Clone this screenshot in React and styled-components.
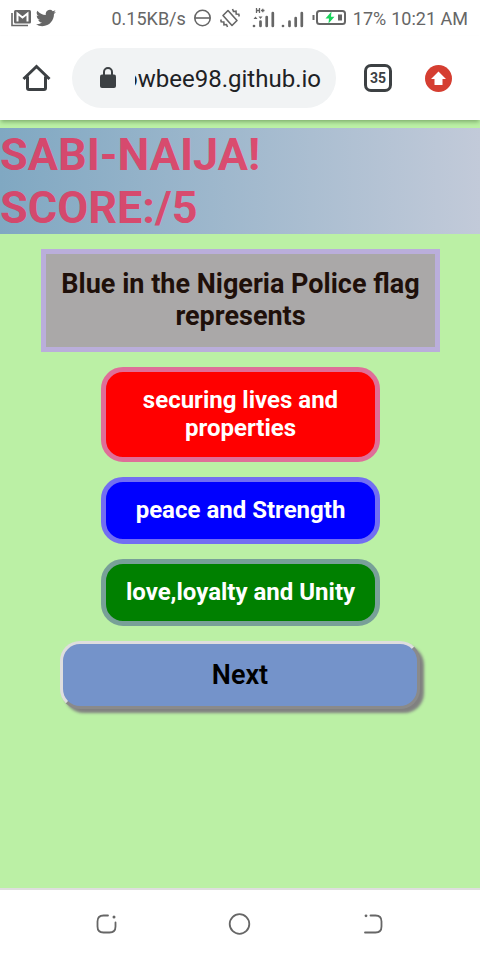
import React from "react";
import styled, { createGlobalStyle } from "styled-components";

const GlobalStyle = createGlobalStyle`
  *, *::before, *::after { box-sizing: border-box; }
  body { margin: 0; background: #bbf0a5; font-family: Roboto, sans-serif; }
  button, input { font-family: inherit; }
  svg { display: block; flex: none; }
`;

const Screen = styled.div`
  display: flex;
  flex-direction: column;
  min-height: 100vh;
`;

const StatusBar = styled.header`
  display: flex;
  align-items: center;
  justify-content: space-between;
  height: 36px;
  padding: 0 12px 0 10px;
  background: #fff;
  color: #666;
  font-size: 18px;
`;

const StatusGroup = styled.div`
  display: flex;
  align-items: center;
  gap: ${(p) => p.$gap}px;
  white-space: nowrap;
`;

const Toolbar = styled.nav`
  display: flex;
  align-items: center;
  height: 84px;
  padding: 0 28px 0 20px;
  background: #fff;
  box-shadow: 0 3px 4px -1px rgba(40, 80, 30, 0.4);
`;

const IconButton = styled.button`
  display: grid;
  place-items: center;
  flex: none;
  width: 32px;
  height: 32px;
  padding: 0;
  border: 0;
  background: none;
`;

const AddressBar = styled.label`
  display: flex;
  align-items: center;
  flex: 1;
  min-width: 0;
  height: 60px;
  margin: 0 28px 0 20px;
  padding: 0 15px 0 27px;
  gap: 18px;
  border-radius: 30px;
  background: #f1f3f4;
`;

const AddressInput = styled.input`
  flex: 1;
  min-width: 0;
  height: 36px;
  padding: 2px 0 0;
  border: 0;
  outline: 0;
  background: none;
  color: #202124;
  font-size: 24px;
  direction: rtl;
`;

const TabButton = styled(IconButton)`
  width: 28px;
  height: 28px;
  margin-right: 32px;
  border: 3px solid #3c4043;
  border-radius: 7px;
  color: #3c4043;
  font-size: 14px;
  font-weight: 700;
`;

const UpdateButton = styled(IconButton)`
  width: 28px;
  height: 28px;
`;

const Page = styled.main`
  flex: 1;
  padding-top: 8px;
`;

const Banner = styled.h1`
  margin: 0 0 15px;
  background: linear-gradient(to right, #80a8c2, #c2cad9);
  color: rgba(234, 46, 85, 0.8);
  font-size: 45px;
  font-weight: 700;
  line-height: 53px;
`;

const BannerLine = styled.span`
  display: block;
`;

const Quiz = styled.section`
  display: flex;
  flex-direction: column;
  gap: 15px;
  padding: 0 40px;
`;

const Question = styled.h2`
  margin: 0 0 0 1px;
  padding: 14px 5px 15px;
  border: 5px solid #baaedb;
  background: #aaa8a8;
  color: #1f100a;
  font-size: 27px;
  font-weight: 700;
  line-height: 32px;
  text-align: center;
`;

const Option = styled.button`
  margin: 0 60px 0 61px;
  padding: 14px 15px 15px;
  border: 5px solid ${(p) => p.$edge};
  border-radius: 22px;
  background: ${(p) => p.$fill};
  color: #fff;
  font-size: 24px;
  font-weight: 700;
  line-height: 28px;
`;

const NextButton = styled.button`
  margin: 0 20px;
  padding: 15px;
  border: 3px solid;
  border-color: #dedede #8a8a8a #8a8a8a #dedede;
  border-radius: 20px;
  background: #7493ca;
  box-shadow: 4px 4px 3px #808080;
  color: #000;
  font-size: 27px;
  font-weight: 600;
  line-height: 32px;
`;

const SystemNav = styled.footer`
  display: flex;
  align-items: center;
  justify-content: space-between;
  height: 72px;
  padding: 0 91px 2px 90px;
  border-top: 2px solid #dedede;
  background: #fff;
`;

const options = [
  { text: "securing lives and properties", fill: "#ff0000", edge: "#df6e98" },
  { text: "peace and Strength", fill: "#0000ff", edge: "#726ef2" },
  { text: "love,loyalty and Unity", fill: "#008000", edge: "#78a098" },
];

const MailIcon = () => (
  <svg width="22" height="18" viewBox="0 0 22 18" fill="none" stroke="#666">
    <path d="M2 4V16.5H18" strokeWidth="1.6" />
    <rect x="4" y="1" width="17" height="13.5" rx="1.5" fill="#666" stroke="none" />
    <path d="M7.5 12.5V4.5L12.5 8.5L17.5 4.5V12.5" stroke="#fff" strokeWidth="2" />
  </svg>
);

const BirdIcon = () => (
  <svg width="20" height="18" viewBox="0 2 24 20" fill="#666">
    <path d="M23.95 4.57a10 10 0 0 1-2.82.77 4.96 4.96 0 0 0 2.16-2.72c-.95.55-2 .95-3.13 1.18a4.92 4.92 0 0 0-8.38 4.48C7.69 8.1 4.07 6.13 1.64 3.16a4.92 4.92 0 0 0 1.52 6.57 4.9 4.9 0 0 1-2.23-.61v.06a4.92 4.92 0 0 0 3.95 4.83 5 5 0 0 1-2.21.08 4.94 4.94 0 0 0 4.6 3.42A9.87 9.87 0 0 1 0 19.54a14 14 0 0 0 7.55 2.21c9.05 0 14-7.5 14-13.98 0-.21 0-.42-.02-.63a9.94 9.94 0 0 0 2.42-2.57z" />
  </svg>
);

const DoNotDisturbIcon = () => (
  <svg width="18" height="18" viewBox="0 0 18 18" fill="none" stroke="#666" strokeWidth="1.6">
    <circle cx="8.5" cy="9" r="7.7" />
    <path d="M1 9H16" />
  </svg>
);

const RotationIcon = () => (
  <svg width="20" height="20" viewBox="0 0 20 20" fill="none" stroke="#666" strokeWidth="1.6">
    <path d="M8 2.5L17 12.5L12 17.5L3 7.5Z" strokeLinejoin="round" />
    <path d="M12.5 1L13.5 3.5L16 3.2L16.2 6L18.8 6.2L19.2 8.5M7.5 19L6.5 16.5L4 16.8L3.8 14L1.2 13.8L0.8 11.5" />
  </svg>
);

const SignalIcon = ({ data }) => (
  <svg width="23" height="22" viewBox="0 0 23 22" fill="none" stroke="#666" strokeWidth="2.7" strokeLinecap="round">
    <path d={data ? "M2 19V19M8.5 19V14.5M14.7 19V10M20.8 19V6" : "M2 19V19M8.5 19V14.5M14.7 19V11M20.8 19V6"} />
    {data && (
      <>
        <path d="M4.5 1V6M7.5 1V6M4.5 3.5H7.5M9 3.5H12.5M10.8 1.8V5.2" strokeWidth="1.3" strokeLinecap="butt" />
        <path d="M1.5 12L3.5 9.5L5.5 12ZM6.5 9.5H10.5L8.5 12Z" fill="#666" stroke="none" />
      </>
    )}
  </svg>
);

const BatteryIcon = () => (
  <svg width="35" height="18" viewBox="0 0 35 18" fill="none">
    <path d="M1.5 6V11" stroke="#666" strokeWidth="2" />
    <rect x="5" y="2" width="28" height="13" rx="2.5" stroke="#666" strokeWidth="2" />
    <rect x="26" y="5.5" width="4" height="6" fill="#666" />
    <path d="M19.5 2.5L13.5 9.5H17L16.5 14.5L22.5 7.8H19Z" fill="#18d35b" />
  </svg>
);

const HomeIcon = () => (
  <svg width="32" height="32" viewBox="0 0 32 32" fill="none" stroke="#3c4043" strokeWidth="3">
    <path d="M3.5 17L16.5 4.5L29.5 17M7.5 14.5V26Q7.5 27.5 9 27.5H24Q25.5 27.5 25.5 26V14.5" />
  </svg>
);

const LockIcon = () => (
  <svg width="18" height="22" viewBox="0 0 18 22">
    <rect x="1" y="7.5" width="16" height="13.5" rx="2" fill="#3c4043" />
    <path d="M5 9V5A4 4 0 0 1 13 5V9" fill="none" stroke="#3c4043" strokeWidth="2" />
  </svg>
);

const UpdateIcon = () => (
  <svg width="28" height="28" viewBox="0 0 28 28">
    <circle cx="14.5" cy="14.5" r="13.5" fill="#d53e31" />
    <path d="M14.5 7.5L22 15H18.5V21H10.5V15H7Z" fill="#fff" />
  </svg>
);

const RecentIcon = () => (
  <svg width="32" height="24" viewBox="0 0 32 24" fill="none" stroke="#666" strokeWidth="1.8" strokeLinecap="round">
    <path d="M18 3.5H13.5Q7.500 3.5 7.5 9.5V14.5Q7.5 20.5 13.5 20.5H19.5Q25.5 20.5 25.5 14.5V10.5" />
    <circle cx="24" cy="5" r="1.5" fill="#666" stroke="none" />
  </svg>
);

const CircleIcon = () => (
  <svg width="24" height="24" viewBox="0 0 24 24" fill="none" stroke="#666" strokeWidth="1.8">
    <circle cx="11.5" cy="12" r="9.8" />
  </svg>
);

const BackIcon = () => (
  <svg width="32" height="24" viewBox="0 0 32 24" fill="none" stroke="#666" strokeWidth="1.8" strokeLinecap="round">
    <path d="M13.5 3.5H18.5Q24.5 3.5 24.5 9.5V14.5Q24.5 20.5 18.5 20.5H8" />
    <circle cx="9" cy="3.8" r="1.4" fill="#666" stroke="none" />
  </svg>
);

export default function App() {
  return (
    <Screen>
      <GlobalStyle />
      <StatusBar>
        <StatusGroup $gap={4}>
          <MailIcon />
          <BirdIcon />
        </StatusGroup>
        <StatusGroup $gap={8}>
          <span>0.15KB/s</span>
          <DoNotDisturbIcon />
          <StatusGroup $gap={12}>
            <RotationIcon />
            <StatusGroup $gap={6}>
              <SignalIcon data />
              <SignalIcon />
            </StatusGroup>
          </StatusGroup>
          <StatusGroup $gap={6}>
            <BatteryIcon />
            <StatusGroup $gap={5}>
              <span>17%</span>
              <time>10:21 AM</time>
            </StatusGroup>
          </StatusGroup>
        </StatusGroup>
      </StatusBar>
      <Toolbar>
        <IconButton type="button" aria-label="Home">
          <HomeIcon />
        </IconButton>
        <AddressBar>
          <LockIcon />
          <AddressInput type="text" aria-label="Address" defaultValue="owbee98.github.io" />
        </AddressBar>
        <TabButton type="button" aria-label="35 open tabs">35</TabButton>
        <UpdateButton type="button" aria-label="Update">
          <UpdateIcon />
        </UpdateButton>
      </Toolbar>
      <Page>
        <Banner>
          <BannerLine>SABI-NAIJA!</BannerLine>
          <BannerLine>SCORE:/5</BannerLine>
        </Banner>
        <Quiz>
          <Question>Blue in the Nigeria Police flag represents</Question>
          {options.map((o) => (
            <Option key={o.text} type="button" $fill={o.fill} $edge={o.edge}>
              {o.text}
            </Option>
          ))}
          <NextButton type="button">Next</NextButton>
        </Quiz>
      </Page>
      <SystemNav>
        <IconButton type="button" aria-label="Recent apps">
          <RecentIcon />
        </IconButton>
        <IconButton type="button" aria-label="Home screen">
          <CircleIcon />
        </IconButton>
        <IconButton type="button" aria-label="Back">
          <BackIcon />
        </IconButton>
      </SystemNav>
    </Screen>
  );
}
